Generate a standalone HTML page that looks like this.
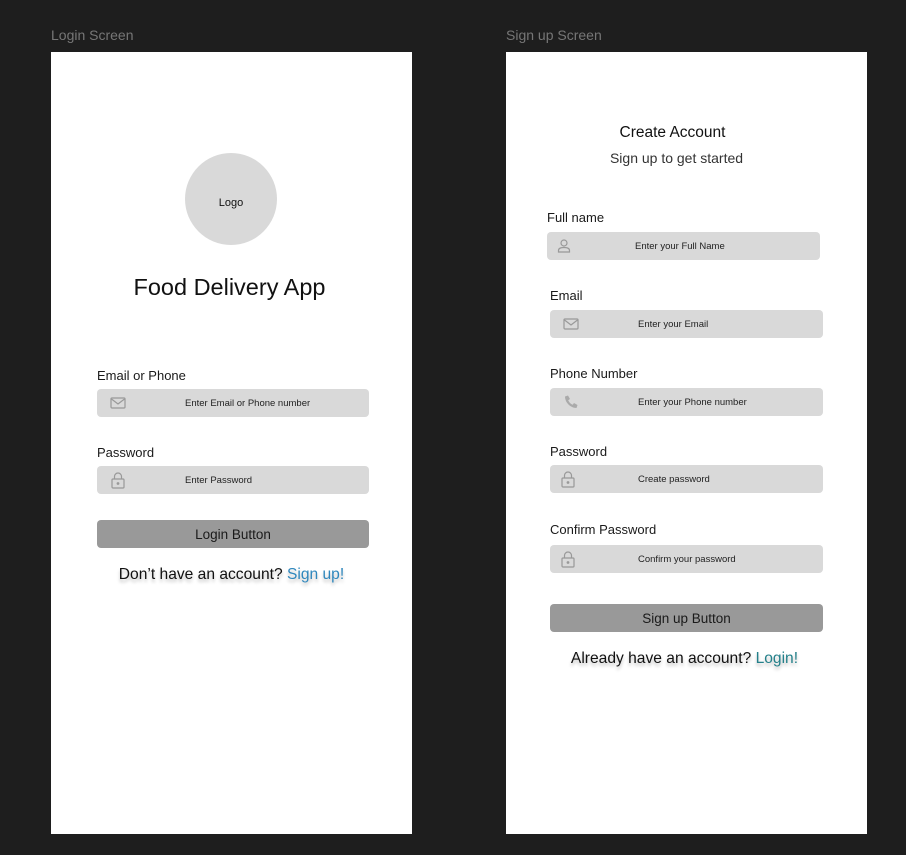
<!DOCTYPE html>
<html><head><style>
*{margin:0;padding:0;box-sizing:border-box}
body{width:906px;height:855px;background:#1e1e1e;position:relative;overflow:hidden;font-family:"Liberation Sans",sans-serif;color:#111}
.a{position:absolute;white-space:nowrap}
.cap{color:#767676;font-size:14px}
.frame{position:absolute;background:#fff;top:52px;width:361px;height:782px}
.lbl{font-size:13px;color:#1a1a1a}
.in{position:absolute;height:28px;background:#d9d9d9;border-radius:4px;font-size:9.5px;color:#222;line-height:30px}
.in svg{position:absolute;top:6px}
.btn{position:absolute;height:28px;background:#999;border-radius:4px;font-size:13.5px;line-height:29px;text-align:center;color:#1a1a1a}
.sh{text-shadow:0 3px 3px rgba(0,0,0,.25);font-size:15.6px}
</style></head><body>
<div class="a cap" style="left:51px;top:27px">Login Screen</div>
<div class="a cap" style="left:506px;top:27px">Sign up Screen</div>
<div class="frame" style="left:51px"></div>
<div class="frame" style="left:506px"></div>

<div class="a" style="left:185px;top:153px;width:92px;height:92px;border-radius:50%;background:#d9d9d9;font-size:11px;line-height:100px;text-align:center">Logo</div>
<div class="a" style="left:49px;width:361px;text-align:center;top:274px;font-size:23.5px">Food Delivery App</div>

<div class="a lbl" style="left:97px;top:368px">Email or Phone</div>
<div class="in" style="left:97px;top:389px;width:272px"><svg style="left:13px" width="16" height="16" viewBox="0 0 16 16" fill="none" stroke="#999" stroke-width="1.2"><rect x="1" y="3" width="14" height="10" rx="1"/><path d="M1.5 4l6.5 5 6.5-5"/></svg><span class="a" style="left:88px">Enter Email or Phone number</span></div>
<div class="a lbl" style="left:97px;top:445px">Password</div>
<div class="in" style="left:97px;top:466px;width:272px"><svg style="left:14px" width="14" height="17" viewBox="0 0 14 17" fill="none" stroke="#999" stroke-width="1.2"><rect x="1" y="7" width="12" height="9" rx="1"/><path d="M3.5 7V4.5a3.5 3.5 0 017 0V7"/><circle cx="7" cy="11.5" r=".8" fill="#999"/></svg><span class="a" style="left:88px">Enter Password</span></div>
<div class="btn" style="left:97px;top:520px;width:272px">Login Button</div>
<div class="a sh" style="left:51px;width:361px;text-align:center;top:566px">Don’t have an account? <span style="color:#2e87bd">Sign up!</span></div>

<div class="a" style="left:506px;width:333px;text-align:center;top:124px;font-size:15.5px">Create Account</div>
<div class="a" style="left:506px;width:341px;text-align:center;top:150px;font-size:14px;color:#333">Sign up to get started</div>

<div class="a lbl" style="left:547px;top:210px">Full name</div>
<div class="in" style="left:547px;top:232px;width:273px"><svg style="left:9px" width="16" height="16" viewBox="0 0 16 16" fill="none" stroke="#999" stroke-width="1.2"><circle cx="8" cy="5" r="3"/><path d="M2.5 14v-1.5c0-2 2-3 5.5-3s5.5 1 5.5 3V14z"/></svg><span class="a" style="left:88px">Enter your Full Name</span></div>
<div class="a lbl" style="left:550px;top:288px">Email</div>
<div class="in" style="left:550px;top:310px;width:273px"><svg style="left:13px" width="16" height="16" viewBox="0 0 16 16" fill="none" stroke="#999" stroke-width="1.2"><rect x="1" y="3" width="14" height="10" rx="1"/><path d="M1.5 4l6.5 5 6.5-5"/></svg><span class="a" style="left:88px">Enter your Email</span></div>
<div class="a lbl" style="left:550px;top:366px">Phone Number</div>
<div class="in" style="left:550px;top:388px;width:273px"><svg style="left:13px" width="16" height="16" viewBox="0 0 16 16"><path d="M2 2.5l3-1 2 3.5-1.8 1.3c.8 2 2.5 3.7 4.5 4.5L11 9l3.5 2-1 3C7.5 14 2 8.5 2 2.5z" fill="#aaa"/></svg><span class="a" style="left:88px">Enter your Phone number</span></div>
<div class="a lbl" style="left:550px;top:444px">Password</div>
<div class="in" style="left:550px;top:465px;width:273px"><svg style="left:11px" width="14" height="17" viewBox="0 0 14 17" fill="none" stroke="#999" stroke-width="1.2"><rect x="1" y="7" width="12" height="9" rx="1"/><path d="M3.5 7V4.5a3.5 3.5 0 017 0V7"/><circle cx="7" cy="11.5" r=".8" fill="#999"/></svg><span class="a" style="left:88px">Create password</span></div>
<div class="a lbl" style="left:550px;top:522px">Confirm Password</div>
<div class="in" style="left:550px;top:545px;width:273px"><svg style="left:11px" width="14" height="17" viewBox="0 0 14 17" fill="none" stroke="#999" stroke-width="1.2"><rect x="1" y="7" width="12" height="9" rx="1"/><path d="M3.5 7V4.5a3.5 3.5 0 017 0V7"/><circle cx="7" cy="11.5" r=".8" fill="#999"/></svg><span class="a" style="left:88px">Confirm your password</span></div>
<div class="btn" style="left:550px;top:604px;width:273px">Sign up Button</div>
<div class="a sh" style="left:548px;width:273px;text-align:center;top:650px">Already have an account? <span style="color:#24808a">Login!</span></div>
</body></html>
